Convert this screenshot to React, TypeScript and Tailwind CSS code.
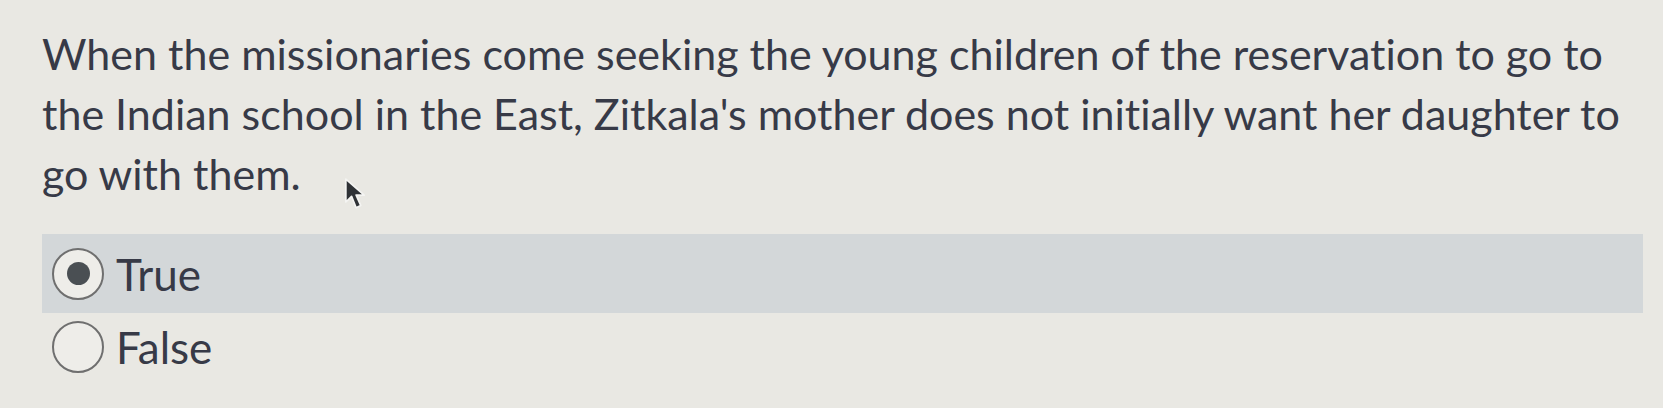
import React, { useState } from 'react';

const options = ['True', 'False'];

const Radio: React.FC<{ checked: boolean }> = ({ checked }) => (
  <span className="flex h-[52px] w-[52px] shrink-0 items-center justify-center rounded-full border-[2.5px] border-[#6f6f6f] bg-[#eeede9]">
    {checked && <span className="h-[23px] w-[23px] rounded-full bg-[#4a4f53]" />}
  </span>
);

const App: React.FC = () => {
  const [selected, setSelected] = useState('True');

  return (
    <div
      className="relative h-[408px] w-[1663px] overflow-hidden bg-[#e9e8e3] pl-[42px] pt-[24px] text-[#373a47] [font-variant-ligatures:none]"
      style={{ fontFamily: 'Lato, "Open Sans", sans-serif' }}
    >
      <p className="whitespace-nowrap text-[43px] leading-[60px]">
        When the missionaries come seeking the young children of the reservation to go to
        <br />
        the Indian school in the East, Zitkala's mother does not initially want her daughter to
        <br />
        go with them.
      </p>

      {/* mouse pointer */}
      <svg className="absolute left-[343px] top-[178px]" width="24" height="32" viewBox="0 0 20 28">
        <path d="M2 1 L2 21 L7 16 L11 26 L15 24 L11 15 L18 15 Z" fill="#2f3236" stroke="#f4f4f2" strokeWidth="1.5" strokeLinejoin="round" />
      </svg>

      <div className="mt-[30px] w-[1601px]">
        {options.map((opt) => {
          const checked = selected === opt;
          return (
            <button
              key={opt}
              onClick={() => setSelected(opt)}
              className={
                checked
                  ? 'flex h-[79px] w-full items-center gap-[12px] bg-[#d3d7d9] pl-[10px] text-left'
                  : 'flex h-[68px] w-full items-center gap-[12px] pl-[10px] text-left'
              }
            >
              <Radio checked={checked} />
              <span className="text-[44px] leading-none">{opt}</span>
            </button>
          );
        })}
      </div>
    </div>
  );
};

export default App;
